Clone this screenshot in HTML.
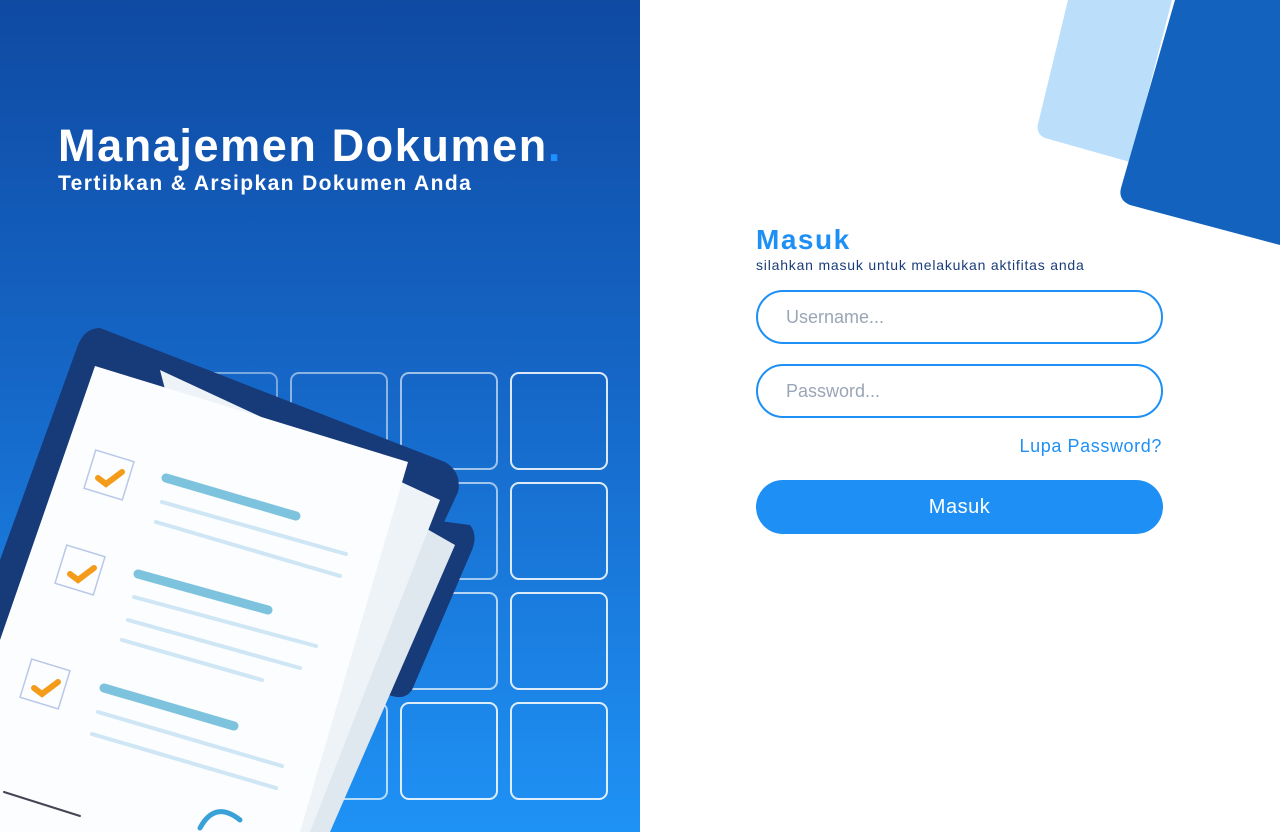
<!DOCTYPE html>
<html><head><meta charset="utf-8"><style>
*{margin:0;padding:0;box-sizing:border-box}
body{width:1280px;height:832px;overflow:hidden;position:relative;background:#fff;font-family:"Liberation Sans",sans-serif}
.left{position:absolute;left:0;top:0;width:640px;height:832px;background:linear-gradient(180deg,#0f4aa3 0%,#1566c6 45%,#1f92f6 100%);overflow:hidden}
h1{position:absolute;left:58px;top:120px;color:#fff;font-size:45px;font-weight:700;letter-spacing:1.6px}
h1 span{color:#1e90ff}
.sub{position:absolute;left:58px;top:172px;color:#fff;font-size:21px;font-weight:700;letter-spacing:1.4px}
.sq{position:absolute;width:98px;height:98px;border:2px solid rgba(255,255,255,.85);border-radius:9px}
.right h2{position:absolute;left:756px;top:224px;color:#1e90f5;font-size:28px;font-weight:700;letter-spacing:1.5px}
.desc{position:absolute;left:756px;top:257px;color:#1a3d7a;font-size:14px;letter-spacing:0.8px}
.inp{position:absolute;left:756px;width:407px;height:54px;border:2px solid #1e90f5;border-radius:27px;padding-left:28px;line-height:50px;color:#9aa6b5;font-size:18px}
.lupa{position:absolute;right:118px;top:436px;color:#1e90f5;font-size:18px;letter-spacing:0.6px}
.btn{position:absolute;left:756px;top:480px;width:407px;height:54px;border-radius:27px;background:#1e90f5;color:#fff;font-size:20px;text-align:center;line-height:54px;letter-spacing:0.5px}
</style></head><body>
<div class="left">
<h1>Manajemen Dokumen<span>.</span></h1>
<div class="sub">Tertibkan &amp; Arsipkan Dokumen Anda</div>
<div class="sq" style="left:180px;top:372px;opacity:.5"></div>
<div class="sq" style="left:290px;top:372px;opacity:.6"></div>
<div class="sq" style="left:400px;top:372px;opacity:.7"></div>
<div class="sq" style="left:510px;top:372px"></div>
<div class="sq" style="left:400px;top:482px;opacity:.7"></div>
<div class="sq" style="left:510px;top:482px"></div>
<div class="sq" style="left:400px;top:592px;opacity:.8"></div>
<div class="sq" style="left:510px;top:592px"></div>
<div class="sq" style="left:290px;top:702px;opacity:.8"></div>
<div class="sq" style="left:400px;top:702px"></div>
<div class="sq" style="left:510px;top:702px"></div>
<svg width="640" height="832" style="position:absolute;left:0;top:0">
<path d="M372 512 L470 525 Q478 535 472 550 L412 690 Q405 700 392 696 L330 680 Z" fill="#173a78"/>
<path d="M100 328 L445 462 Q462 472 458 492 L300 832 L0 832 L0 560 L78 345 Q85 328 100 328 Z" fill="#173a78"/>
<path d="M385 505 L455 545 L330 832 L290 832 Z" fill="#dfe8ef"/>
<path d="M160 370 L440 500 L310 832 L280 832 Z" fill="#eef3f7"/>
<path d="M95 366 L408 462 L300 832 L0 832 L0 640 Z" fill="#fcfdfe"/>
<g fill="none" stroke-linecap="round">
<rect x="89" y="455" width="40" height="40" stroke="#b8c8e8" stroke-width="1.5" transform="rotate(17 109 475)"/>
<rect x="60" y="550" width="40" height="40" stroke="#b8c8e8" stroke-width="1.5" transform="rotate(17 80 570)"/>
<rect x="25" y="664" width="40" height="40" stroke="#b8c8e8" stroke-width="1.5" transform="rotate(17 45 684)"/>
<path d="M98 478 L106 484 L122 472" stroke="#f49b1a" stroke-width="6"/>
<path d="M70 574 L78 580 L94 568" stroke="#f49b1a" stroke-width="6"/>
<path d="M34 688 L42 694 L58 682" stroke="#f49b1a" stroke-width="6"/>
<path d="M166 478 L296 516" stroke="#7ec3de" stroke-width="9"/>
<path d="M162 502 L346 554 M156 522 L340 576" stroke="#cfe6f5" stroke-width="4"/>
<path d="M138 574 L268 610" stroke="#7ec3de" stroke-width="9"/>
<path d="M134 597 L316 646 M128 620 L300 668 M122 640 L262 680" stroke="#cfe6f5" stroke-width="4"/>
<path d="M104 688 L234 726" stroke="#7ec3de" stroke-width="9"/>
<path d="M98 712 L282 766 M92 734 L276 788" stroke="#cfe6f5" stroke-width="4"/>
<path d="M4 792 L80 816" stroke="#445" stroke-width="2"/>
<path d="M200 828 Q215 800 240 820" stroke="#3aa0d8" stroke-width="5"/>
</g>
</svg>
</div>
<svg width="640" height="260" style="position:absolute;left:640px;top:0">
<path d="M428 0 L532 0 L490 162 L405 138 Q396 134 398 124 Z" fill="#bbdefb"/>
<path d="M535 0 L640 0 L640 245 L490 205 Q478 200 481 188 Z" fill="#1262be"/>
</svg>
<div class="right">
<h2>Masuk</h2>
<div class="desc">silahkan masuk untuk melakukan aktifitas anda</div>
<div class="inp" style="top:290px">Username...</div>
<div class="inp" style="top:364px">Password...</div>
<div class="lupa">Lupa Password?</div>
<div class="btn">Masuk</div>
</div>
</body></html>
